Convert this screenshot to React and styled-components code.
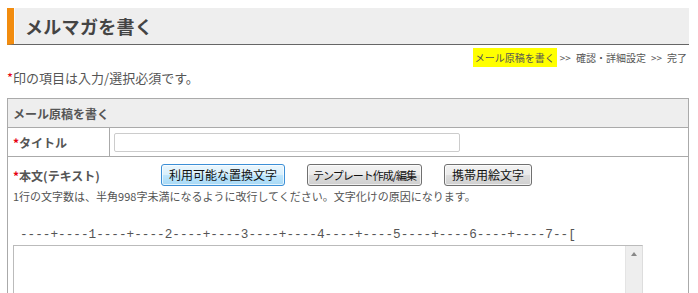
import React from "react";
import styled, { createGlobalStyle } from "styled-components";

const GlobalStyle = createGlobalStyle`
  html, body {
    margin: 0;
    padding: 0;
    background: #fff;
  }
  body {
    font-family: "Noto Sans CJK JP", "Noto Sans", sans-serif;
    color: #555;
  }
`;

export default function App() {
  return (
    <>
      <GlobalStyle />
      <Page>
        <PageTitle>メルマガを書く</PageTitle>
        <Steps>
          <Step $current>メール原稿を書く</Step>
          <Sep>&gt;&gt;</Sep>
          <Step>確認・詳細設定</Step>
          <Sep>&gt;&gt;</Sep>
          <Step>完了</Step>
        </Steps>
        <Notice>
          <Req>*</Req>印の項目は入力/選択必須です。
        </Notice>

        <Table>
          <HeadRow>メール原稿を書く</HeadRow>
          <Row>
            <Label>
              <Req>*</Req>タイトル
            </Label>
            <Field>
              <TitleInput type="text" />
            </Field>
          </Row>
          <BodyCell>
            <Toolbar>
              <BodyLabel>
                <Req>*</Req>本文(テキスト)
              </BodyLabel>
              <Buttons>
                <Button $active>利用可能な置換文字</Button>
                <Button $tight>テンプレート作成/編集</Button>
                <Button>携帯用絵文字</Button>
              </Buttons>
            </Toolbar>
            <Hint>
              1行の文字数は、半角998字未満になるように改行してください。文字化けの原因になります。
            </Hint>
            <Ruler>----+----1----+----2----+----3----+----4----+----5----+----6----+----7--[</Ruler>
            <Editor>
              <Scrollbar>
                <ArrowUp />
              </Scrollbar>
            </Editor>
          </BodyCell>
        </Table>
      </Page>
    </>
  );
}

const Page = styled.div`
  width: 682px;
  padding: 8px 0 0 7px;
`;

const PageTitle = styled.h1`
  margin: 0;
  height: 36px;
  display: flex;
  align-items: center;
  padding-left: 11px;
  background: #eeeeee;
  border-left: 7px solid #f28c0f;
  box-shadow: inset 1px 0 0 #fafafa;
  border-bottom: 1px solid #666;
  font-size: 18px;
  font-weight: bold;
  color: #444;
  letter-spacing: 0.3px;
`;

const Steps = styled.div`
  display: flex;
  justify-content: flex-end;
  align-items: center;
  margin-top: 3px;
  height: 19px;
  font-size: 10px;
  color: #555;
`;

const Step = styled.span`
  display: flex;
  align-items: center;
  height: 19px;
  padding: 0 2px;
  background: ${(p) => (p.$current ? "#ffff00" : "transparent")};
`;

const Sep = styled.span`
  padding: 0 3px;
`;

const Notice = styled.p`
  margin: 2px 0 0;
  font-size: 13px;
  line-height: 17px;
  color: #555;
`;

const Req = styled.span`
  color: #e60012;
`;

const Table = styled.div`
  margin-top: 12px;
  border: 1px solid #aaa;
  border-bottom: none;
`;

const HeadRow = styled.div`
  height: 28px;
  display: flex;
  align-items: center;
  padding-left: 5px;
  background: #eeeeee;
  border-bottom: 1px solid #aaa;
  font-size: 12px;
  font-weight: bold;
  color: #555;
`;

const Row = styled.div`
  display: grid;
  grid-template-columns: 102px 1fr;
  height: 28px;
  border-bottom: 1px solid #aaa;
`;

const Label = styled.div`
  display: flex;
  align-items: center;
  padding-left: 5px;
  border-right: 1px solid #aaa;
  font-size: 12px;
  font-weight: bold;
  color: #555;
`;

const Field = styled.div`
  display: flex;
  align-items: center;
  padding-left: 4px;
`;

const TitleInput = styled.input`
  box-sizing: border-box;
  width: 346px;
  height: 19px;
  margin: 0;
  border: 1px solid #ccc;
  border-radius: 2px;
  background: #fff;
`;

const BodyCell = styled.div`
  padding: 7px 0 0 5px;
  height: 130px;
  overflow: hidden;
`;

const Toolbar = styled.div`
  display: flex;
  align-items: center;
`;

const BodyLabel = styled.div`
  width: 148px;
  font-size: 12px;
  font-weight: bold;
  color: #555;
`;

const Buttons = styled.div`
  display: flex;
  gap: 22px;
`;

const Button = styled.button`
  box-sizing: border-box;
  height: 22px;
  padding: 0 ${(p) => (p.$tight ? "5px" : "7px")};
  margin: 0;
  font-family: "Noto Sans CJK JP", sans-serif;
  font-size: ${(p) => (p.$tight ? "11px" : "12px")};
  line-height: 1;
  letter-spacing: ${(p) => (p.$tight ? "-1px" : "0")};
  color: #111;
  border: 1px solid ${(p) => (p.$active ? "#3c8fd6" : "#707070")};
  border-radius: 3px;
  background: ${(p) =>
    p.$active
      ? "linear-gradient(#eaf6fd, #d9f0fc 50%, #bee6fd 51%, #a7d9f5)"
      : "linear-gradient(#f2f2f2, #ebebeb 50%, #dddddd 51%, #cfcfcf)"};
  box-shadow: inset 0 0 0 1px rgba(255, 255, 255, 0.7);
`;

const Hint = styled.div`
  margin-top: 2px;
  font-size: 11px;
  line-height: 16px;
  color: #555;
`;

const Ruler = styled.div`
  margin: 23px 0 0 7px;
  font-family: "Liberation Mono", "DejaVu Sans Mono", monospace;
  font-size: 12.7px;
  line-height: 16px;
  color: #555;
  white-space: pre;
`;

const Editor = styled.div`
  position: relative;
  margin-top: 2px;
  width: 628px;
  height: 80px;
  border: 1px solid #bbb;
  border-right-color: #ddd;
  border-bottom: none;
  background: #fff;
`;

const Scrollbar = styled.div`
  position: absolute;
  top: 0;
  right: 0;
  width: 16px;
  height: 100%;
  background: #eeeeee;
  border-left: 1px solid #e4e4e4;
  display: flex;
  justify-content: center;
`;

const ArrowUp = styled.span`
  margin-top: 6px;
  width: 0;
  height: 0;
  border-left: 3.5px solid transparent;
  border-right: 3.5px solid transparent;
  border-bottom: 4px solid #888;
`;
